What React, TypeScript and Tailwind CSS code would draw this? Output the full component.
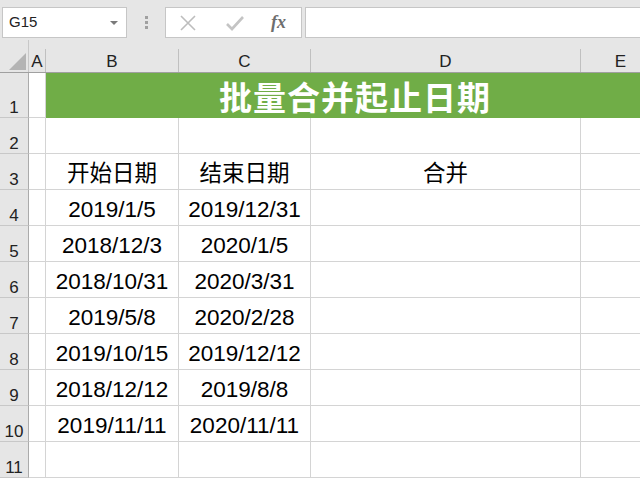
import React from 'react'

const cols = [
  { key: 'A', w: 'w-[17px]' },
  { key: 'B', w: 'w-[133px]' },
  { key: 'C', w: 'w-[132px]' },
  { key: 'D', w: 'w-[270px]' },
  { key: 'E', w: 'w-[80px]' },
]

const rows: string[][] = [
  ['', '开始日期', '结束日期', '合并', ''],
  ['', '2019/1/5', '2019/12/31', '', ''],
  ['', '2018/12/3', '2020/1/5', '', ''],
  ['', '2018/10/31', '2020/3/31', '', ''],
  ['', '2019/5/8', '2020/2/28', '', ''],
  ['', '2019/10/15', '2019/12/12', '', ''],
  ['', '2018/12/12', '2019/8/8', '', ''],
  ['', '2019/11/11', '2020/11/11', '', ''],
  ['', '', '', '', ''],
]

const font = { fontFamily: '"Liberation Sans", "Noto Sans CJK SC", sans-serif' }

function RowHead({ n, h }: { n: number; h: string }) {
  return (
    <div className={`w-[29px] shrink-0 ${h} bg-[#e6e6e6] border-r border-r-[#ababab] border-b border-b-[#c8c8c8] flex items-end justify-center pb-[1px] text-[17px] leading-none text-[#222]`}>
      {n}
    </div>
  )
}

export default function App() {
  return (
    <div className="w-[640px] h-[480px] overflow-hidden bg-white" style={font}>
      {/* formula bar */}
      <div className="h-[40px] bg-[#e6e6e6] flex items-start pt-[7px]">
        <div className="ml-[2px] w-[125px] h-[31px] bg-white border border-[#c6c6c6] flex items-center justify-between pl-[6px] pr-[8px]">
          <span className="text-[15px] text-[#222]">G15</span>
          <span className="w-0 h-0 border-l-[4px] border-r-[4px] border-t-[4px] border-l-transparent border-r-transparent border-t-[#7a7a7a]" />
        </div>
        <div className="w-[38px] h-[31px] flex flex-col items-center justify-center gap-[2px]">
          <span className="w-[3px] h-[3px] bg-[#a0a0a0]" />
          <span className="w-[3px] h-[3px] bg-[#a0a0a0]" />
          <span className="w-[3px] h-[3px] bg-[#a0a0a0]" />
        </div>
        <div className="w-[137px] h-[31px] bg-white border border-[#c6c6c6] flex items-center">
          <svg width="18" height="18" viewBox="0 0 18 18" className="ml-[13px]">
            <path d="M2 2 L16 16 M16 2 L2 16" stroke="#bdbdbd" strokeWidth="1.6" />
          </svg>
          <svg width="20" height="18" viewBox="0 0 20 18" className="ml-[28px]">
            <path d="M2 10 L7 15 L18 3" stroke="#c4c4c4" strokeWidth="2.6" fill="none" />
          </svg>
          <span className="ml-[26px] text-[18px] italic font-bold text-[#6e6e6e]" style={{ fontFamily: '"Liberation Serif", serif' }}>fx</span>
        </div>
        <div className="ml-[3px] flex-1 h-[31px] bg-white border border-[#c6c6c6] border-r-0" />
      </div>

      {/* column headers */}
      <div className="flex h-[33px] bg-[#e6e6e6] border-b border-b-[#a0a0a0]">
        <div className="w-[29px] shrink-0 border-r border-r-[#c8c8c8] flex items-end justify-end pr-[2px] pb-[2px]">
          <svg width="17" height="17" viewBox="0 0 17 17">
            <polygon points="17,0 17,17 0,17" fill="#b4b4b4" />
          </svg>
        </div>
        {cols.map(c => (
          <div key={c.key} className={`${c.w} shrink-0 flex items-end`}>
            <div className="flex-1 h-[23px] flex items-end justify-center pb-[2px] text-[17px] leading-none text-[#222]">{c.key}</div>
            <div className="w-px h-[23px] bg-[#c0c0c0]" />
          </div>
        ))}
      </div>

      {/* row 1 */}
      <div className="flex h-[45px]">
        <RowHead n={1} h="h-[45px]" />
        <div className="w-[17px] shrink-0 border-r border-b border-[#d4d4d4]" />
        <div className="w-[618px] shrink-0 bg-[#70ad47] flex items-center justify-center text-white text-[33px] font-bold tracking-[1px] pt-[2px]" style={{ fontFamily: '"Noto Sans CJK SC", sans-serif' }}>
          批量合并起止日期
        </div>
      </div>

      {/* row 2 blank */}
      <div className="flex h-[36px]">
        <RowHead n={2} h="h-[36px]" />
        {cols.map(c => (
          <div key={c.key} className={`${c.w} shrink-0 border-r border-b border-[#d4d4d4]`} />
        ))}
      </div>

      {rows.map((r, i) => (
        <div key={i} className="flex h-[36px]">
          <RowHead n={i + 3} h="h-[36px]" />
          {cols.map((c, j) => (
            <div key={c.key} className={`${c.w} shrink-0 border-r border-b border-[#d4d4d4] flex items-end justify-center pb-[4px] text-[22.5px] leading-none text-black whitespace-nowrap`}>
              {r[j]}
            </div>
          ))}
        </div>
      ))}
    </div>
  )
}
